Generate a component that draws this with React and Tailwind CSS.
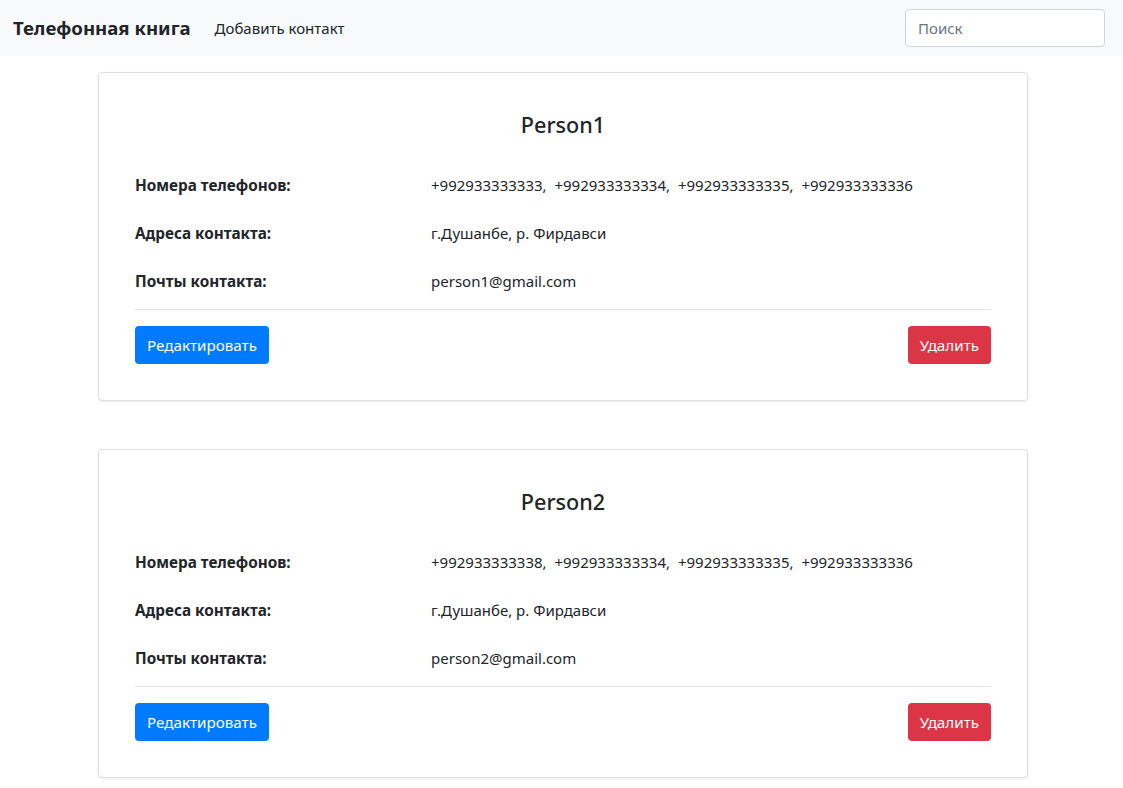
import React from 'react';

const contacts = [
  {
    id: 1,
    name: 'Person1',
    phones: ['+992933333333', '+992933333334', '+992933333335', '+992933333336'],
    address: 'г.Душанбе, р. Фирдавси',
    email: 'person1@gmail.com',
  },
  {
    id: 2,
    name: 'Person2',
    phones: ['+992933333338', '+992933333334', '+992933333335', '+992933333336'],
    address: 'г.Душанбе, р. Фирдавси',
    email: 'person2@gmail.com',
  },
];

function InfoRow({ label, children }) {
  return (
    <div className="grid grid-cols-[296px_1fr] h-12 items-center">
      <span className="font-bold text-[15.3px]">{label}</span>
      <span className="text-[15px]">{children}</span>
    </div>
  );
}

function ContactCard({ contact }) {
  return (
    <div className="w-[930px] bg-white border border-[#dfdfdf] rounded shadow-[0_1px_3px_rgba(0,0,0,0.08)] px-9 pt-9 pb-9">
      <h3 className="text-center text-[21.6px] leading-8 font-medium mb-5">{contact.name}</h3>
      <InfoRow label="Номера телефонов:">
        <span className="[word-spacing:4px]">{contact.phones.join(', ')}</span>
      </InfoRow>
      <InfoRow label="Адреса контакта:">{contact.address}</InfoRow>
      <InfoRow label="Почты контакта:">{contact.email}</InfoRow>
      <div className="border-t border-[#e5e5e5] mt-1 mb-4" />
      <div className="flex justify-between">
        <button className="h-[38px] px-3 rounded bg-[#007bff] text-white text-[15.2px]">
          Редактировать
        </button>
        <button className="h-[38px] px-3 rounded bg-[#dc3545] text-white text-[15.2px]">
          Удалить
        </button>
      </div>
    </div>
  );
}

export default function App() {
  return (
    <div className="min-h-screen bg-white text-[#212529] font-['Noto_Sans',sans-serif]">
      <nav className="h-14 bg-[#f8f9fa] flex items-center pl-[13px] pr-[18px]">
        <span className="text-[18.6px] font-bold mr-6">Телефонная книга</span>
        <a className="text-[15px] text-[#212529]">Добавить контакт</a>
        <input
          className="ml-auto w-[200px] h-[38px] px-3 border border-[#ced4da] rounded bg-white text-[15px] placeholder-[#6c757d] outline-none"
          placeholder="Поиск"
        />
      </nav>
      <div className="pl-[98px] pt-4 flex flex-col gap-12">
        {contacts.map((c) => (
          <ContactCard key={c.id} contact={c} />
        ))}
      </div>
    </div>
  );
}
